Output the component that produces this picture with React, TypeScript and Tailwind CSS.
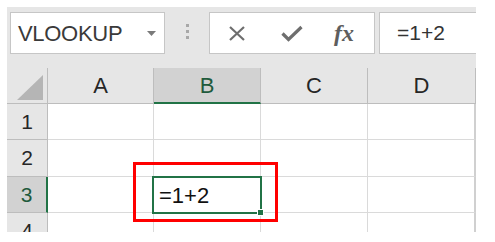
import React from 'react';

const font = { fontFamily: '"Liberation Sans", Arial, sans-serif' };

const columns = ['A', 'B', 'C', 'D'];
const rows = [
  { n: '1', h: 'h-[36px]' },
  { n: '2', h: 'h-[37px]' },
  { n: '3', h: 'h-[36px]' },
  { n: '4', h: 'h-[36px]' },
];

function Toolbar() {
  return (
    <div className="flex h-[61px] items-start bg-[#e6e6e6] pt-[5px]">
      {/* name box */}
      <div className="ml-[3px] flex h-[42px] w-[155px] items-center border border-[#c6c6c6] bg-white pl-[7px]">
        <span className="text-[22px] tracking-[-0.3px] text-[#3a3a3a]">VLOOKUP</span>
        <svg className="ml-auto mr-[8px]" width="9" height="5" viewBox="0 0 9 5">
          <path d="M0 0h9L4.5 5z" fill="#7a7a7a" />
        </svg>
      </div>

      {/* grip */}
      <div className="ml-[21px] mt-[12px] flex flex-col gap-[3px]">
        <span className="h-[3px] w-[3px] bg-[#a8a8a8]" />
        <span className="h-[3px] w-[3px] bg-[#a8a8a8]" />
        <span className="h-[3px] w-[3px] bg-[#a8a8a8]" />
      </div>

      {/* cancel / enter / fx */}
      <div className="ml-[20px] flex h-[42px] w-[166px] items-center border border-[#c6c6c6] bg-white">
        <svg className="ml-[17px]" width="20" height="15" viewBox="0 0 20 15">
          <path d="M3 1l14 13M17 1L3 14" stroke="#6e6e6e" strokeWidth="2.2" fill="none" />
        </svg>
        <svg className="ml-[34px]" width="22" height="17" viewBox="0 0 22 17">
          <path d="M1.5 8.5l6 6L20.5 2" stroke="#6e6e6e" strokeWidth="3.2" fill="none" />
        </svg>
        <span
          className="ml-[31px] text-[24px] font-semibold italic leading-none text-[#5e5e5e]"
          style={{ fontFamily: '"Liberation Serif", "Times New Roman", serif' }}
        >
          fx
        </span>
      </div>

      {/* formula input */}
      <div className="ml-[4px] flex h-[42px] flex-1 items-center border-y border-l border-[#c6c6c6] bg-white pl-[17px]">
        <span className="text-[21px] text-[#333]">=1+2</span>
      </div>
    </div>
  );
}

function Grid() {
  return (
    <div className="relative">
      {/* column headers */}
      <div className="grid h-[36px] grid-cols-[41px_106px_107px_107px_108px] bg-[#e6e6e6]">
        <div className="flex items-end justify-end border-r border-b border-[#bdbdbd] pb-[3px] pr-[4px]">
          <svg width="26" height="25" viewBox="0 0 26 25">
            <path d="M26 0V25H0z" fill="#b5b5b5" />
          </svg>
        </div>
        {columns.map((c) => (
          <div
            key={c}
            className={
              c === 'B'
                ? 'flex items-center justify-center border-r border-b-2 border-r-[#bdbdbd] border-b-[#217346] bg-[#d2d2d2] text-[22px] text-[#1f5a3c]'
                : 'flex items-center justify-center border-r border-b border-[#bdbdbd] text-[22px] text-[#262626]'
            }
          >
            {c}
          </div>
        ))}
      </div>

      {rows.map((r) => (
        <div key={r.n} className={`grid ${r.h} grid-cols-[41px_106px_107px_107px_108px]`}>
          <div
            className={
              r.n === '3'
                ? 'flex items-center justify-center border-r-2 border-b border-r-[#217346] border-b-[#bdbdbd] bg-[#d2d2d2] text-[21px] text-[#1f5a3c]'
                : 'flex items-center justify-center border-r border-b border-[#bdbdbd] bg-[#e6e6e6] text-[21px] text-[#262626]'
            }
          >
            {r.n}
          </div>
          {columns.map((c) => (
            <div
              key={c}
              className={
                c === 'D'
                  ? 'relative border-r-2 border-b border-r-[#d0d0d0] border-b-[#dadada] bg-white'
                  : 'relative border-r border-b border-[#dadada] bg-white'
              }
            >
              {r.n === '3' && c === 'B' && (
                <div className="absolute -top-[1px] -left-[2px] -right-[2px] -bottom-[2px] z-10 flex items-center border-2 border-[#217346] pl-[5px]">
                  <span className="text-[22px] text-[#111]">=1+2</span>
                  <span className="absolute -right-[4px] -bottom-[4px] h-[7px] w-[7px] border border-white bg-[#217346]" />
                </div>
              )}
            </div>
          ))}
        </div>
      ))}

      {/* red highlight box */}
      <div className="pointer-events-none absolute left-[126px] top-[94px] z-20 h-[60px] w-[145px] border-[3px] border-[#ff0000]" />
    </div>
  );
}

export default function App() {
  return (
    <div className="h-[242px] w-[495px] bg-white pl-[7px] pt-[7px]" style={font}>
      <div className="h-[225px] w-[469px] overflow-hidden">
        <Toolbar />
        <Grid />
      </div>
    </div>
  );
}
